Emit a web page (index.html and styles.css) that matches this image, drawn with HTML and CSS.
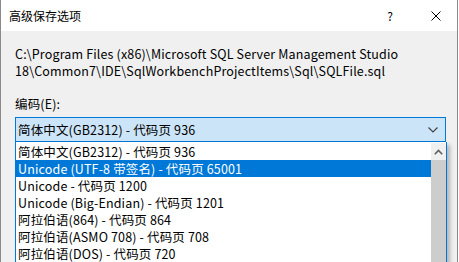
FILE: index.html
```html
<!DOCTYPE html>
<html lang="zh-CN">
<head>
<meta charset="utf-8">
<link rel="stylesheet" href="styles.css">
</head>
<body>
<div class="window">
  <div class="titlebar">
    <span class="title">高级保存选项</span>
    <div class="title-buttons">
      <span class="help">?</span>
      <svg class="close" width="10" height="10" viewBox="0 0 10 10"><path d="M0.5 0.5 L9.5 9.5 M9.5 0.5 L0.5 9.5" stroke="#000" stroke-width="1" fill="none"/></svg>
    </div>
  </div>
  <div class="content">
    <p class="path">C:\Program Files (x86)\Microsoft SQL Server Management Studio<br>18\Common7\IDE\SqlWorkbenchProjectItems\Sql\SQLFile.sql</p>
    <div class="label">编码(E):</div>
    <div class="combo-wrap">
      <div class="combo">
        <span class="combo-text">简体中文(GB2312) - 代码页 936</span>
        <svg class="chevron" width="10" height="6" viewBox="0 0 10 6"><path d="M0.5 0.5 L5 5 L9.5 0.5" stroke="#404040" stroke-width="1.1" fill="none"/></svg>
      </div>
      <div class="dropdown">
        <ul class="items">
          <li>简体中文(GB2312) - 代码页 936</li>
          <li class="selected">Unicode (UTF-8 带签名) - 代码页 65001</li>
          <li>Unicode - 代码页 1200</li>
          <li>Unicode (Big-Endian) - 代码页 1201</li>
          <li>阿拉伯语(864) - 代码页 864</li>
          <li>阿拉伯语(ASMO 708) - 代码页 708</li>
          <li>阿拉伯语(DOS) - 代码页 720</li>
        </ul>
        <div class="scrollbar">
          <div class="arrow"><svg width="9" height="6" viewBox="0 0 9 6"><path d="M0.8 5.2 L4.5 1.5 L8.2 5.2" stroke="#606060" stroke-width="1.6" fill="none"/></svg></div>
          <div class="thumb"></div>
        </div>
      </div>
    </div>
  </div>
</div>
</body>
</html>
```

FILE: styles.css
```css
html, body {
  margin: 0;
  padding: 0;
  width: 459px;
  height: 262px;
  overflow: hidden;
  background: #ffffff;
}
.window {
  box-sizing: border-box;
  width: 458px;
  height: 262px;
  overflow: hidden;
  border-left: 1px solid #8a8a8a;
  border-right: 1px solid #8a8a8a;
  background: #f0f0f0;
  font-family: "Noto Sans CJK SC", "Noto Sans", sans-serif;
  font-size: 12.5px;
  letter-spacing: 0.15px;
  color: #000;
}
.titlebar {
  height: 31px;
  background: #ffffff;
  display: flex;
  align-items: center;
  justify-content: space-between;
  padding-left: 8px;
}
.title {
  font-size: 12px;
  line-height: 16px;
  letter-spacing: 0;
}
.title-buttons {
  display: flex;
  align-items: center;
}
.help {
  font-size: 12px;
  margin-right: 38px;
}
.close {
  margin-right: 16px;
  display: block;
}
.content {
  padding: 14px 0 0 14px;
}
.path {
  margin: 0;
  line-height: 17px;
}
.label {
  margin-top: 17px;
  line-height: 16px;
}
.combo-wrap {
  position: relative;
  margin-top: 5px;
  width: 431px;
}
.combo {
  box-sizing: border-box;
  height: 25px;
  background: #cce4f7;
  border: 1px solid #0078d7;
  display: flex;
  align-items: center;
  justify-content: space-between;
  padding: 0 7px 0 2px;
}
.combo-text {
  line-height: 16px;
}
.chevron {
  display: block;
}
.dropdown {
  position: absolute;
  left: 0;
  top: 25px;
  width: 432px;
  height: 130px;
  box-sizing: border-box;
  background: #ffffff;
  border: 1px solid #0078d7;
  border-top: none;
  display: flex;
  box-shadow: 3px 3px 4px rgba(0,0,0,0.25);
}
.items {
  list-style: none;
  margin: 0;
  padding: 1px 0 0 0;
  flex: 1;
}
.items li {
  height: 17px;
  line-height: 17px;
  padding-left: 2px;
  white-space: nowrap;
}
.items li.selected {
  background: #0078d7;
  color: #ffffff;
}
.scrollbar {
  width: 15px;
  margin-top: 1px;
  display: flex;
  flex-direction: column;
}
.arrow {
  height: 17px;
  background: #f0f0f0;
  display: flex;
  align-items: center;
  justify-content: center;
}
.arrow svg {
  display: block;
}
.thumb {
  flex: 1;
  background: #cdcdcd;
}
```
